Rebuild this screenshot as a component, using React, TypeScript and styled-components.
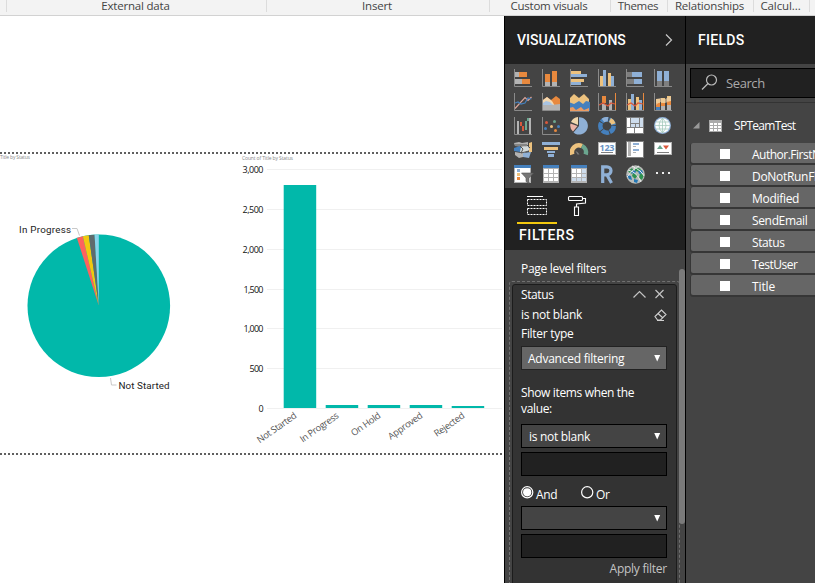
import React from "react";
import styled, { createGlobalStyle } from "styled-components";

const Global = createGlobalStyle`
  * { box-sizing: border-box; }
  body { margin: 0; background: #fff; overflow: hidden; font-family: "Open Sans", "Noto Sans", sans-serif; font-size: 12px; }
  svg { display: block; }
`;

const Page = styled.div`
  width: 815px;
  height: 583px;
  overflow: hidden;
  display: flex;
  flex-direction: column;
`;

const T = styled.span<{ $ls?: number }>`
  letter-spacing: ${(p) => p.$ls ?? 0}px;
  white-space: nowrap;
`;

/* ---------- ribbon ---------- */
const Ribbon = styled.div`
  height: 16px;
  flex: none;
  display: flex;
  background: #f3f3f3;
  border-bottom: 1px solid #d2d2d2;
  padding-left: 6px;
`;
const RibbonGroup = styled.div<{ $w: number }>`
  width: ${(p) => p.$w}px;
  flex: none;
  height: 12px;
  border-left: 1px solid #dcdcdc;
  display: flex;
  justify-content: center;
  padding-right: 2px;
  color: #444;
  font-size: 11.5px;
  line-height: 12px;
`;
const groups: [string, number, number][] = [
  ["External data", 260, -0.2],
  ["Insert", 223, -0.2],
  ["Custom visuals", 121, -0.25],
  ["Themes", 57, -0.3],
  ["Relationships", 86, -0.2],
  ["Calcul...", 56, -0.1],
  ["", 10, 0],
];

/* ---------- report canvas ---------- */
const Main = styled.div`
  flex: 1;
  display: flex;
  min-height: 0;
`;
const Canvas = styled.div`
  width: 505px;
  flex: none;
  border-right: 1px solid #000;
  padding-top: 136px;
  background: #fff;
`;
const Dots = styled.div`
  height: 2px;
  background: repeating-linear-gradient(90deg, #606060 0 2px, #fff 2px 4px);
`;
const Visuals = styled.div`
  display: flex;
  height: 299px;
`;
const PIE = ["#fd625e", "#f2c80f", "#5f6b6d", "#8ad4eb"];
const EDGES = [17.9, 12.9, 8.1, 3.4, 0];
const pt = (deg: number) => {
  const a = (deg * Math.PI) / 180;
  return `${98.8 - 71.3 * Math.sin(a)} ${305.8 - 71.3 * Math.cos(a)}`;
};

const PieChart = () => (
  <svg width="240" height="299" viewBox="0 154 240 299">
    <text x="0" y="159" fontSize="5" fill="#888" textLength="30">Title by Status</text>
    <circle cx="98.8" cy="305.8" r="71.3" fill="#01b8aa" />
    {PIE.map((c, i) => (
      <path key={c} fill={c} d={`M98.8 305.8L${pt(EDGES[i])}A71.3 71.3 0 0 1 ${pt(EDGES[i + 1])}Z`} />
    ))}
    <path d="M72 228.5h5l2.5 7M110.500 378l1 7h5" fill="none" stroke="#c8c8c8" />
    <g fontFamily="Roboto" fontSize="9.8" fill="#222">
      <text x="19" y="233" textLength="52">In Progress</text>
      <text x="118.500" y="389" textLength="51">Not Started</text>
    </g>
  </svg>
);

const ticks: [string, number, number][] = [
  ["3,000", 169.5, 21], ["2,500", 209.5, 21], ["2,000", 249.5, 21], ["1,500", 289.5, 20],
  ["1,000", 328.5, 20], ["500", 368.5, 14], ["0", 408.5, 5],
];
const bars: [string, number, number][] = [
  ["Not Started", 185, 46], ["In Progress", 405, 45], ["On Hold", 405, 34], ["Approved", 405, 40], ["Rejected", 406, 35],
];

const BarChart = () => (
  <svg width="264" height="299" viewBox="240 154 264 299">
    <text x="242" y="160" fontSize="5" fill="#888" textLength="51">Count of Title by Status</text>
    {ticks.map(([t, y, w]) => (
      <g key={t}>
        <path d={`M267 ${y}H502`} stroke="#f0f0f0" />
        <text x={263.5 - w} y={y + 3} fontSize="9" fill="#111" textLength={w}>{t}</text>
      </g>
    ))}
    {bars.map(([t, y, w], i) => (
      <g key={t}>
        <rect x={283.700 + i * 42} y={y} width="32.500" height={408 - y} fill="#01b8aa" />
        <g transform={`translate(${297.5 + i * 42} 417) rotate(-35)`}>
          <text x={-w} y="0" fontSize="9.300" fill="#555" textLength={w}>{t}</text>
        </g>
      </g>
    ))}
  </svg>
);

/* ---------- panes ---------- */
const Pane = styled.div<{ $w: number }>`
  width: ${(p) => p.$w}px;
  flex: none;
  background: #444;
  overflow: hidden;
  color: #fff;
`;
const VizPane = styled(Pane)`
  border-right: 1px solid #000;
`;
const PaneHeader = styled.div`
  height: 48px;
  background: #212121;
  display: flex;
  align-items: center;
  justify-content: space-between;
  padding: 0 12px;
  font: 500 14px Roboto, sans-serif;
`;
const Gallery = styled.div`
  height: 124px;
  padding: 5px 0 0 9px;
  display: grid;
  grid-template-columns: repeat(6, 28px);
  grid-auto-rows: 24px;
`;
const TabArea = styled.div`
  height: 62px;
  background: #212121;
  padding-left: 12px;
`;
const Tabs = styled.div`
  display: flex;
  height: 36px;
`;
const Tab = styled.div<{ $on?: boolean }>`
  width: 40px;
  border-bottom: 2px solid ${(p) => (p.$on ? "#f2c80f" : "transparent")};
  padding: 6px 0 0 9px;
`;
const TabTitle = styled.div`
  font: 500 14px/22px Roboto, sans-serif;
  padding-left: 2px;
`;
const FilterArea = styled.div`
  display: flex;
  height: 333px;
`;
const FilterColumn = styled.div`
  width: 174px;
  padding-left: 4px;
`;
const FilterHeading = styled.div`
  height: 31px;
  line-height: 37px;
  padding-left: 12px;
`;
const DropZone = styled.div`
  width: 171px;
  height: 400px;
  border: 1px dashed #707070;
  border-radius: 3px;
  padding: 2px;
`;
const Card = styled.div`
  height: 390px;
  background: #333;
  border: 1px solid #1c1c1c;
  border-radius: 3px;
  padding: 0 9px 0 8px;
  width: 165px;
`;
const Line = styled.div<{ $h: number }>`
  height: ${(p) => p.$h}px;
  line-height: ${(p) => p.$h}px;
  display: flex;
  align-items: center;
  justify-content: space-between;
`;
const CardIcons = styled.div`
  display: flex;
  gap: 9px;
  padding-right: 3px;
  margin-top: -2px;
`;
const Prompt = styled.div`
  margin: 15px 0 7px;
  line-height: 16px;
`;
const Select = styled.div<{ $light?: boolean; $top?: number }>`
  width: 146px;
  height: 24px;
  margin-top: ${(p) => p.$top ?? 0}px;
  border: 1px solid ${(p) => (p.$light ? "#222" : "#000")};
  background: ${(p) => (p.$light ? "#666" : "#444")};
  display: flex;
  align-items: center;
  justify-content: space-between;
  padding: 1px 5px 0 ${(p) => (p.$light ? 6 : 7)}px;
`;
const Input = styled.div`
  width: 146px;
  height: 24px;
  margin-top: 4px;
  border: 1px solid #000;
  background: #212121;
`;
const Radios = styled.div`
  display: flex;
  height: 30px;
  padding-top: 10px;
`;
const Option = styled.div<{ $w: number }>`
  width: ${(p) => p.$w}px;
  display: flex;
  gap: 2px;
  line-height: 18px;
`;
const Apply = styled.div`
  height: 22px;
  line-height: 22px;
  text-align: right;
  color: #c4c4c4;
`;
const Thumb = styled.div`
  width: 6px;
  height: 255px;
  margin-top: 19px;
  background: #7a7a7a;
  border-radius: 3px;
`;

const SearchArea = styled.div`
  height: 39px;
  padding: 4px 0 0 4px;
  border-bottom: 1px solid #333;
`;
const Search = styled.div`
  height: 30px;
  border: 1px solid #000;
  border-right: 0;
  background: #212121;
  color: #aaa;
  display: flex;
  align-items: center;
  gap: 7px;
  padding-left: 11px;
  font-size: 13px;
`;
const SearchIcon = styled.svg`
  margin: -2px 1px 0 -1px;
`;
const TableRow = styled.div`
  height: 40px;
  display: flex;
  align-items: center;
  padding: 4px 0 0 7px;
`;
const TableIcon = styled.div`
  margin: 2px 12px 0 9px;
`;
const FieldRow = styled.div`
  height: 20px;
  margin: 0 0 2px 5px;
  background: #666;
  box-shadow: 0 1px 0 1px #363636;
  border-radius: 2px 0 0 2px;
  display: flex;
  align-items: center;
  padding-left: 29px;
  overflow: hidden;
`;
const FieldBox = styled.div`
  width: 10px;
  height: 10px;
  margin-right: 22px;
  margin-top: 1px;
  background: #fff;
  flex: none;
`;
const FieldName = styled(T)`
  margin-top: 3px;
`;
const fields: [string, number][] = [
  ["Author.FirstName", -0.5], ["DoNotRunFlow", -0.3], ["Modified", -0.3], ["SendEmail", -0.35],
  ["Status", -0.4], ["TestUser", -0.5], ["Title", -0.1],
];

/* ---------- gallery icons ---------- */
const O = "#e8893e", G = "#b3b3b3", D = "#7f7f7f", B = "#8fb0d6", Y = "#edc27e", N = "#4580bd", GR = "#6ba68f", RD = "#d9583c", W = "#fff";
type R = [number, number, number, number, string];
const Icon = ({ r = [], axis, children }: { r?: R[]; axis?: boolean; children?: React.ReactNode }) => (
  <svg width="20" height="20" viewBox="0 0 20 20">
    {r.map(([x, y, w, h, c], i) => <rect key={i} x={x} y={y} width={w} height={h} fill={c} />)}
    {children}
    {axis && <path d="M.5 0v17.5H18" fill="none" stroke="#8a8a8a" />}
  </svg>
);
const Grid = ({ tint }: { tint?: boolean }) => (
  <Icon r={[[1, 0, 16, 18, G], [1, 0, 16, 3, N], ...[2, 7, 12].flatMap((x) => [4, 9, 13].map((y): R => [x, y, 4, y === 4 ? 4 : 3, tint && (x === 12 || y === 13) ? "#cddcec" : W]))]} />
);

const Icons = () => (
  <Gallery>
    <Icon axis r={[[1, 3, 4, 5, G], [5, 3, 8, 5, O], [1, 10, 7, 5, G], [8, 10, 8, 5, O]]} />
    <Icon axis r={[[3, 5, 5, 8, O], [3, 13, 5, 4, G], [10, 2, 5, 11, O], [10, 13, 5, 4, G]]} />
    <Icon axis r={[[1, 2, 10, 3, Y], [1, 5, 16, 3, B], [1, 10, 13, 3, Y], [1, 13, 10, 3, B]]} />
    <Icon axis r={[[2, 7, 3, 10, Y], [5, 1, 3, 16, B], [10, 4, 3, 13, Y], [13, 7, 3, 10, B]]} />
    <Icon axis r={[[1, 3, 5, 5, D], [6, 3, 10, 5, B], [1, 10, 7, 5, D], [8, 10, 8, 5, B]]} />
    <Icon axis r={[[3, 2, 5, 10, B], [3, 12, 5, 5, D], [10, 2, 5, 10, B], [10, 12, 5, 5, D]]} />

    <Icon axis>
      <path d="M1 15.500L11 4.500l3 3 3.500-3.500" fill="none" stroke="#dda59a" strokeWidth="1.200" />
      <path d="M1 10l3-1 3 2 4-1 3-5 3.500 1" fill="none" stroke={N} strokeWidth="1.200" />
    </Icon>
    <Icon axis>
      <path d="M1 7l4-3 4 3 5-4 4 3v11H1z" fill={O} />
      <path d="M1 7l4-3 5 4 3 5H1z" fill="#f3d8b0" />
      <path d="M1 10l4-1 4 3 9-1v6H1z" fill={G} />
      <path d="M1 10l3-2 4 1 3 3H1z" fill="#a9c4e2" />
    </Icon>
    <Icon>
      <path d="M-1 6l5-5 5 4 5-4 5 5v12H-1z" fill={Y} />
      <path d="M-1 9l5 2 5-3 4 3 3-3 4 1v9H-1z" fill={N} />
      <path d="M-1 15l4-1 3 3 5-3 3 3 5-2v3H-1z" fill="#ec9c63" />
      <path d="M-.5 0v18.500H19" fill="none" stroke={D} />
    </Icon>
    <Icon axis r={[[4, 3, 4, 7, O], [4, 11, 4, 6, G], [11, 7, 3, 10, G], [17, 0, 1, 18, O]]}>
      <path d="M1 12l4-2 5 3 3-3 4 1" fill="none" stroke={RD} strokeWidth="1.200" />
    </Icon>
    <Icon axis r={[[2, 6, 3, 11, Y], [5, 1, 3, 16, B], [10, 4, 3, 13, Y], [13, 7, 3, 10, B], [17, 0, 1, 18, O]]}>
      <path d="M1 12l4-2 4 3 3-3 5 1" fill="none" stroke={RD} strokeWidth="1.200" />
    </Icon>
    <Icon axis r={[[2, 6, 4, 4, Y], [2, 10, 4, 4, O], [2, 14, 4, 3, N], [7, 5, 4, 5, Y], [7, 10, 4, 3, O], [7, 13, 4, 4, G], [13, 3, 4, 5, Y], [13, 8, 4, 4, O], [13, 12, 4, 5, G]]}>
      <path d="M2 6l5-1 4 1 6-3v5l-6 2-5-1-4 3z" fill="#eccfa8" opacity=".65" />
    </Icon>

    <Icon axis r={[[3, 4, 2, 13, G], [6, 5, 2, 4, RD], [8, 9, 2, 5, RD], [11, 4, 2, 9, GR], [13, 1, 2, 3, GR], [15, 1, 2, 16, G]]} />
    <Icon axis>
      {[[4.5, 5.5, RD], [12.5, 4.5, GR], [9.5, 9.5, Y], [3.5, 11.5, N], [13.5, 13.5, O], [16.5, 9.5, N]].map(([x, y, c]) => (
        <circle key={`${x}`} cx={x} cy={y} r="1.500" fill={c as string} />
      ))}
    </Icon>
    <Icon>
      <path d="M9 9V.2A8.700 8.700 0 1 1 3.500 15.500z" fill={B} />
      <path d="M8 8V0A8.500 8.500 0 0 0 1 5z" fill="#f1d8ad" />
      <path d="M7.500 9L.5 6.500A8 8 0 0 0 3 14.500z" fill="#edb4a6" />
    </Icon>
    <Icon>
      <g fill="none" strokeWidth="4.500">
        <circle cx="9" cy="9" r="6.700" stroke={N} strokeDasharray="7.500 .9" />
        <path d="M5 3.500A6.700 6.700 0 0 1 10 2.300" stroke={B} />
        <path d="M12 3A6.700 6.700 0 0 1 15.500 7" stroke={Y} />
      </g>
    </Icon>
    <Icon r={[[0, 0, 18, 17, D], [1, 1, 3, 9, W], [5, 1, 8, 5, "#cddcec"], [14, 1, 3, 9, "#cddcec"], [5, 7, 4, 3, "#cddcec"], [10, 7, 3, 3, "#cddcec"], [1, 11, 7, 5, W], [9, 11, 8, 5, W]]} />
    <Icon>
      <circle cx="8.500" cy="8.500" r="8.500" fill={B} />
      <circle cx="8.500" cy="8.500" r="7.300" fill="#fbfdfd" />
      <path d="M8.500 1v15M1 8.500h15M2 5h13M2 12h13M8.500 1Q1.500 8.500 8.500 16Q15.500 8.500 8.500 1" fill="none" stroke="#9cc4b5" strokeWidth=".7" />
    </Icon>

    <Icon>
      <path d="M0 2l5-1 3 1 6-1v4l-4 1-9-1z" fill={G} />
      <path d="M0 7l6-2 2 3-2 3-6-1z" fill={N} />
      <path d="M7 6l7-1 2 4-6 3-4-1z" fill="#d3dadb" />
      <path d="M15 2l3-1v10h-3z" fill={Y} />
      <path d="M1 11l6 1 2-1v5l-4 1-4-3z" fill={G} />
      <path d="M9 12l8-1-2 6-6-1z" fill={B} />
      <path d="M1 4h12l3 3M6 5l3 3-2 4 8-2" stroke="#555" fill="none" />
    </Icon>
    <Icon r={[[0, 1, 18, 3, B], [2, 6, 14, 3, Y], [5, 10, 8, 2, B], [6, 13, 6, 3, B]]} />
    <Icon>
      <g fill="none" strokeWidth="4.500">
        <path d="M2.300 13.500A7 7 0 0 1 12 5" stroke={Y} />
        <path d="M12 5A7 7 0 0 1 15.700 13.500" stroke={GR} />
      </g>
      <path d="M9.500 13.500l-2-2.500-2-1 2 3.500z" fill={D} />
    </Icon>
    <Icon r={[[0, 1, 18, 13, G], [1, 2, 16, 11, W], [3, 11, 12, 1, D]]}>
      <text x="1.500" y="9.500" fontSize="9" fontWeight="700" fill="#6893c4" textLength="15">123</text>
    </Icon>
    <Icon r={[[0, 0, 18, 17, D], [1, 1, 16, 15, W], [2, 1, 3, 14, G], [7, 2, 6, 2, B], [7, 5, 3, 1, G], [7, 8, 6, 2, B], [7, 11, 3, 1, G]]} />
    <Icon r={[[0, 1, 18, 13, G], [1, 2, 16, 11, W], [3, 11, 12, 1, D]]}>
      <path d="M3 8h6L6 4z" fill={GR} /><path d="M9 4.500h6l-3 4z" fill={RD} />
    </Icon>

    <Icon r={[[0, 0, 17, 18, G], [1, 3, 15, 14, W], [0, 0, 17, 3, N], [3, 4, 3, 3, B], [3, 8, 3, 3, Y], [3, 12, 3, 3, O]]}>
      <path d="M7.500 8h12L15 13v5.500l-3-2V13z" fill="#777" stroke="#555" strokeWidth=".6" />
    </Icon>
    <Grid />
    <Grid tint />
    <Icon>
      <path d="M4.700 18V1.800H9a4 4 0 0 1 0 8H5M9 10l4.500 8" fill="none" stroke={B} strokeWidth="3.200" />
    </Icon>
    <Icon>
      <circle cx="9.500" cy="9.500" r="9.300" fill="#b8bcba" />
      <path d="M2 6l4-3 2 3-3 3zM9 2l6 2-2 3-4-1zM7 8l5 2-3 4-3-3zM14 8l4 2-2 5-3-2z" fill="#2e9151" />
      <path d="M1 10l4 1 1 4-3-1zM8 14l4 1-1 3-3-1zM12 6l4-1 1 3-4 1zM6 5l4 1-1 3-4-1z" fill="#2377b5" />
      <path d="M2 5Q11 7 15 17M6 1Q16 6 18 11M1 12Q8 3 13 1" stroke="#eee" fill="none" />
    </Icon>
    <Icon r={[[2, 7, 2, 2, "#eee"], [8, 7, 2, 2, "#eee"], [14, 7, 2, 2, "#eee"]]} />
  </Gallery>
);

const Arrow = () => <svg width="7" height="8" viewBox="0 0 7 8"><path d="M.2 0h6L3.200 6.500z" fill="#fff" /></svg>;
const Radio = ({ on }: { on?: boolean }) => (
  <svg width="13" height="13" viewBox="0 0 13 13">
    <circle cx="6.200" cy="6.300" r="5.600" fill="none" stroke="#fff" strokeWidth="1.200" />
    {on && <circle cx="6.200" cy="6.300" r="4.100" fill="#fff" />}
  </svg>
);

export default function App() {
  return (
    <Page>
      <Global />
      <Ribbon>
        {groups.map(([t, w, ls], i) => <RibbonGroup key={i} $w={w}><T $ls={ls}>{t}</T></RibbonGroup>)}
      </Ribbon>
      <Main>
        <Canvas>
          <Dots />
          <Visuals><PieChart /><BarChart /></Visuals>
          <Dots />
        </Canvas>
        <VizPane $w={181}>
          <PaneHeader>
            <T>VISUALIZATIONS</T>
            <svg width="8" height="12" viewBox="0 0 8 12"><path d="M1 .5L6.500 6 1 11.500" fill="none" stroke="#c8c8c8" strokeWidth="1.200" /></svg>
          </PaneHeader>
          <Icons />
          <TabArea>
            <Tabs>
              <Tab $on>
                <svg width="22" height="22" viewBox="0 0 22 22" fill="none" stroke="#fff">
                  <path d="M1 2.500h16" /><path d="M1.500 5.500h19v6h-19zM1.500 14.500h19v6h-19z" strokeDasharray="2 1" />
                </svg>
              </Tab>
              <Tab>
                <svg width="22" height="22" viewBox="0 0 22 22" fill="none" stroke="#fff" strokeWidth="1.100">
                  <rect x="2.500" y="2.500" width="14" height="4" rx="1" />
                  <path d="M16.500 4.500h3v4.500l-9 1v2.500M8.500 21.500v-8.500h4v8.500z" />
                </svg>
              </Tab>
            </Tabs>
            <TabTitle><T $ls={0.6}>FILTERS</T></TabTitle>
          </TabArea>
          <FilterArea>
            <FilterColumn>
              <FilterHeading><T $ls={-0.3}>Page level filters</T></FilterHeading>
              <DropZone>
                <Card>
                  <Line $h={20}>
                    <T $ls={-0.4}>Status</T>
                    <CardIcons>
                      <svg width="13" height="10" viewBox="0 0 13 10"><path d="M.5 8.500l6-6 6 6" fill="none" stroke="#c4c4c4" strokeWidth="1.200" /></svg>
                      <svg width="9" height="10" viewBox="0 0 9 10"><path d="M.5 1l8 8M8.500 1l-8 8" stroke="#c4c4c4" strokeWidth="1.200" /></svg>
                    </CardIcons>
                  </Line>
                  <Line $h={19}>
                    <T $ls={-0.3}>is not blank</T>
                    <svg width="13" height="12" viewBox="0 0 13 12" fill="none" stroke="#d0d0d0" strokeWidth="1.100"><path d="M1 7.500l6.500-6.500 4.500 4.500-5.500 5.500h-3zM4 4.500l5 4.500M3 11.500h7" /></svg>
                  </Line>
                  <Line $h={19}><T $ls={-0.3}>Filter type</T></Line>
                  <Select $light $top={3}><T $ls={-0.25}>Advanced filtering</T><Arrow /></Select>
                  <Prompt><T $ls={-0.35}>Show items when the<br />value:</T></Prompt>
                  <Select><T $ls={-0.3}>is not blank</T><Arrow /></Select>
                  <Input />
                  <Radios>
                    <Option $w={60}><Radio on /><T $ls={-0.3}>And</T></Option>
                    <Option $w={50}><Radio /><T $ls={-0.3}>Or</T></Option>
                  </Radios>
                  <Select><span /><Arrow /></Select>
                  <Input />
                  <Apply><T $ls={-0.25}>Apply filter</T></Apply>
                </Card>
              </DropZone>
            </FilterColumn>
            <Thumb />
          </FilterArea>
        </VizPane>
        <Pane $w={129}>
          <PaneHeader><T $ls={0.3}>FIELDS</T></PaneHeader>
          <SearchArea>
            <Search>
              <SearchIcon width="17" height="17" viewBox="0 0 17 17" fill="none" stroke="#bbb" strokeWidth="1.200"><circle cx="10.500" cy="6" r="5" /><path d="M7 9.500L1 15.500" /></SearchIcon>
              <T $ls={-0.4}>Search</T>
            </Search>
          </SearchArea>
          <TableRow>
            <svg width="7" height="7" viewBox="0 0 7 7"><path d="M6.500 0v6.500H0z" fill="#999" /></svg>
            <TableIcon>
              <svg width="13" height="12" viewBox="0 0 13 12">
                <rect width="13" height="12" fill="#aaa" />
                {[1, 5, 9].flatMap((x) => [3, 6, 9].map((y) => <rect key={`${x}-${y}`} x={x} y={y} width="3" height="2" fill="#fff" />))}
              </svg>
            </TableIcon>
            <T $ls={-0.7}>SPTeamTest</T>
          </TableRow>
          {fields.map(([f, ls]) => <FieldRow key={f}><FieldBox /><FieldName $ls={ls}>{f}</FieldName></FieldRow>)}
        </Pane>
      </Main>
    </Page>
  );
}
